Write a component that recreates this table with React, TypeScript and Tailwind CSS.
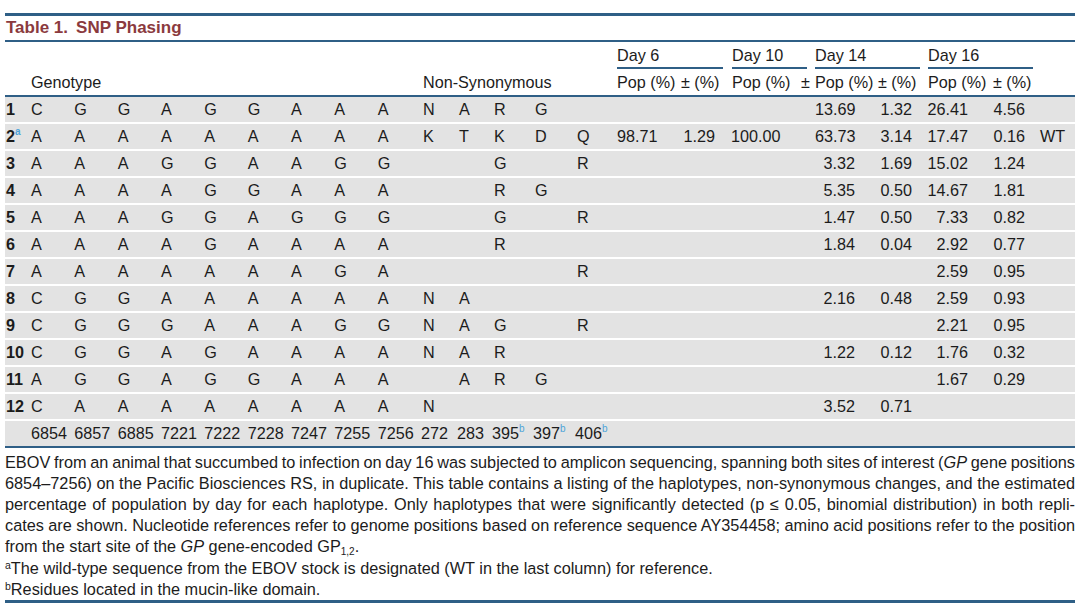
const cols =
  'grid grid-cols-[26px_repeat(9,43.333px)_36px_35px_41px_42px_42px_55px_59px_62px_22px_62px_50px_65px_46px_37px]'

type Row = {
  num: string
  sup?: string
  geno: string[]
  ns: string[]
  vals: string[]
}

const rows: Row[] = [
  { num: '1', geno: 'C G G A G G A A A'.split(' '), ns: ['N', 'A', 'R', 'G', ''], vals: ['', '', '', '', '13.69', '1.32', '26.41', '4.56', ''] },
  { num: '2', sup: 'a', geno: 'A A A A A A A A A'.split(' '), ns: ['K', 'T', 'K', 'D', 'Q'], vals: ['98.71', '1.29', '100.00', '', '63.73', '3.14', '17.47', '0.16', 'WT'] },
  { num: '3', geno: 'A A A G G A A G G'.split(' '), ns: ['', '', 'G', '', 'R'], vals: ['', '', '', '', '3.32', '1.69', '15.02', '1.24', ''] },
  { num: '4', geno: 'A A A A G G A A A'.split(' '), ns: ['', '', 'R', 'G', ''], vals: ['', '', '', '', '5.35', '0.50', '14.67', '1.81', ''] },
  { num: '5', geno: 'A A A G G A G G G'.split(' '), ns: ['', '', 'G', '', 'R'], vals: ['', '', '', '', '1.47', '0.50', '7.33', '0.82', ''] },
  { num: '6', geno: 'A A A A G A A A A'.split(' '), ns: ['', '', 'R', '', ''], vals: ['', '', '', '', '1.84', '0.04', '2.92', '0.77', ''] },
  { num: '7', geno: 'A A A A A A A G A'.split(' '), ns: ['', '', '', '', 'R'], vals: ['', '', '', '', '', '', '2.59', '0.95', ''] },
  { num: '8', geno: 'C G G A A A A A A'.split(' '), ns: ['N', 'A', '', '', ''], vals: ['', '', '', '', '2.16', '0.48', '2.59', '0.93', ''] },
  { num: '9', geno: 'C G G G A A A G G'.split(' '), ns: ['N', 'A', 'G', '', 'R'], vals: ['', '', '', '', '', '', '2.21', '0.95', ''] },
  { num: '10', geno: 'C G G A G A A A A'.split(' '), ns: ['N', 'A', 'R', '', ''], vals: ['', '', '', '', '1.22', '0.12', '1.76', '0.32', ''] },
  { num: '11', geno: 'A G G A G G A A A'.split(' '), ns: ['', 'A', 'R', 'G', ''], vals: ['', '', '', '', '', '', '1.67', '0.29', ''] },
  { num: '12', geno: 'C A A A A A A A A'.split(' '), ns: ['N', '', '', '', ''], vals: ['', '', '', '', '3.52', '0.71', '', '', ''] },
]

// right padding per value column: D6 pop, D6 ±, D10 pop, D10 ±, D14 pop, D14 ±, D16 pop, D16 ±, WT
const valPad = [
  'text-right pr-[16px]',
  'text-right pr-[16px]',
  'text-right pr-[13px]',
  'text-right',
  'text-right pr-[22px]',
  'text-right pr-[15px]',
  'text-right pr-[24px]',
  'text-right pr-[13px]',
  'pl-[2px]',
]

const positions = ['6854', '6857', '6885', '7221', '7222', '7228', '7247', '7255', '7256']
const aaPositions = [
  { n: '272' },
  { n: '283' },
  { n: '395', sup: 'b' },
  { n: '397', sup: 'b' },
  { n: '406', sup: 'b' },
]

const justified = '[text-align-last:justify] text-justify whitespace-nowrap [word-spacing:-1.2px]'

function Rule() {
  return <div className="h-[2px] bg-[#2f5f86]" />
}

function Sup({ children }: { children: string }) {
  return <sup className="relative top-[-1px] align-super text-[10px] leading-none text-[#4fa3d9]">{children}</sup>
}

function DataRow({ row }: { row: Row }) {
  return (
    <div className={`${cols} h-[25px] items-center bg-[#e3e3e3] mb-[2px]`}>
      <div className="pl-[1px] font-bold">
        {row.num}
        {row.sup && <Sup>{row.sup}</Sup>}
      </div>
      {row.geno.map((g, i) => (
        <div key={'g' + i}>{g}</div>
      ))}
      {row.ns.map((n, i) => (
        <div key={'n' + i} className="pl-[2px]">
          {n}
        </div>
      ))}
      {row.vals.map((v, i) => (
        <div key={'v' + i} className={valPad[i]}>
          {v}
        </div>
      ))}
    </div>
  )
}

export default function App() {
  return (
    <div className="w-[1080px] h-[612px] overflow-hidden bg-white px-[5px] pt-[13px] font-['Liberation_Sans',Arial,sans-serif] text-[16.2px] text-[#1c1c1c]">
      <div className="h-[3px] bg-[#2f5f86]" />
      <div className="flex h-[24px] items-center pl-[1px] text-[17px] font-bold text-[#8b3a3e]">
        <span>Table 1.</span>
        <span className="ml-[8px]">SNP Phasing</span>
      </div>
      <Rule />

      <div className={`${cols} h-[27px] items-end`}>
        <div className="col-start-16 col-span-2 mr-[8px] border-b-2 border-[#2f5f86]">Day 6</div>
        <div className="col-start-18 col-span-2 ml-[1px] mr-[8px] border-b-2 border-[#2f5f86]">Day 10</div>
        <div className="col-start-20 col-span-2 mr-[7px] border-b-2 border-[#2f5f86]">Day 14</div>
        <div className="col-start-22 col-span-2 ml-[1px] mr-[5px] border-b-2 border-[#2f5f86]">Day 16</div>
      </div>
      <div className={`${cols} h-[26px] items-center`}>
        <div className="col-start-2 col-span-9">Genotype</div>
        <div className="col-start-11 col-span-5 pl-[2px]">Non-Synonymous</div>
        <div className="whitespace-nowrap">Pop (%)</div>
        <div className="whitespace-nowrap pl-[9px]">± (%)</div>
        <div className="whitespace-nowrap pl-[1px]">Pop (%)</div>
        <div className="whitespace-nowrap pl-[8px]">±</div>
        <div className="whitespace-nowrap">Pop (%)</div>
        <div className="whitespace-nowrap pl-[1px]">± (%)</div>
        <div className="whitespace-nowrap pl-[1px]">Pop (%)</div>
        <div className="whitespace-nowrap pl-[1px]">± (%)</div>
      </div>
      <Rule />

      <div>
        {rows.map((r) => (
          <DataRow key={r.num} row={r} />
        ))}
        <div className={`${cols} h-[25px] items-center bg-[#e3e3e3]`}>
          <div />
          {positions.map((p) => (
            <div key={p}>{p}</div>
          ))}
          {aaPositions.map((a) => (
            <div key={a.n} className="whitespace-nowrap">
              {a.n}
              {a.sup && <Sup>{a.sup}</Sup>}
            </div>
          ))}
        </div>
      </div>
      <Rule />

      <div className="pt-[4px] text-[16.3px] leading-[21px]">
        <div className={justified}>
          EBOV from an animal that succumbed to infection on day 16 was subjected to amplicon sequencing, spanning both sites of interest (<i>GP</i> gene positions
        </div>
        <div className={justified}>
          6854–7256) on the Pacific Biosciences RS, in duplicate. This table contains a listing of the haplotypes, non-synonymous changes, and the estimated
        </div>
        <div className={justified}>
          percentage of population by day for each haplotype. Only haplotypes that were significantly detected (p ≤ 0.05, binomial distribution) in both repli-
        </div>
        <div className={justified}>
          cates are shown. Nucleotide references refer to genome positions based on reference sequence AY354458; amino acid positions refer to the position
        </div>
        <div>
          from the start site of the <i>GP</i> gene-encoded GP<sub className="text-[10px]">1,2</sub>.
        </div>
        <div className="mt-[1px]">
          <sup className="text-[10.5px]">a</sup>The wild-type sequence from the EBOV stock is designated (WT in the last column) for reference.
        </div>
        <div>
          <sup className="text-[10.5px]">b</sup>Residues located in the mucin-like domain.
        </div>
      </div>
      <div className="h-[3px] bg-[#2f5f86]" />
    </div>
  )
}
